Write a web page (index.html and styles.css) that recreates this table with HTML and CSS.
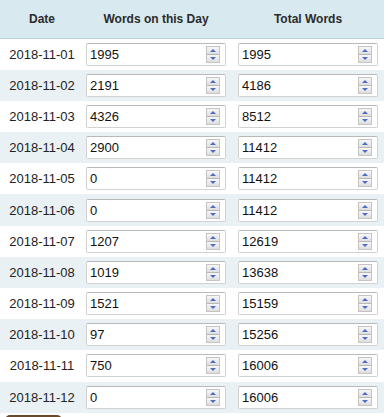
FILE: index.html
```html
<!DOCTYPE html>
<html>
<head>
<meta charset="utf-8">
<link rel="stylesheet" href="styles.css">
</head>
<body>
<table class="log">
  <thead>
    <tr><th class="c-date">Date</th><th class="c-num">Words on this Day</th><th class="c-num">Total Words</th></tr>
  </thead>
  <tbody>
    <tr><td class="date">2018-11-01</td><td><div class="field"><span class="val">1995</span><span class="spin"><i class="up"></i><i class="dn"></i></span></div></td><td><div class="field"><span class="val">1995</span><span class="spin"><i class="up"></i><i class="dn"></i></span></div></td></tr>
    <tr><td class="date">2018-11-02</td><td><div class="field"><span class="val">2191</span><span class="spin"><i class="up"></i><i class="dn"></i></span></div></td><td><div class="field"><span class="val">4186</span><span class="spin"><i class="up"></i><i class="dn"></i></span></div></td></tr>
    <tr><td class="date">2018-11-03</td><td><div class="field"><span class="val">4326</span><span class="spin"><i class="up"></i><i class="dn"></i></span></div></td><td><div class="field"><span class="val">8512</span><span class="spin"><i class="up"></i><i class="dn"></i></span></div></td></tr>
    <tr><td class="date">2018-11-04</td><td><div class="field"><span class="val">2900</span><span class="spin"><i class="up"></i><i class="dn"></i></span></div></td><td><div class="field"><span class="val">11412</span><span class="spin"><i class="up"></i><i class="dn"></i></span></div></td></tr>
    <tr><td class="date">2018-11-05</td><td><div class="field"><span class="val">0</span><span class="spin"><i class="up"></i><i class="dn"></i></span></div></td><td><div class="field"><span class="val">11412</span><span class="spin"><i class="up"></i><i class="dn"></i></span></div></td></tr>
    <tr><td class="date">2018-11-06</td><td><div class="field"><span class="val">0</span><span class="spin"><i class="up"></i><i class="dn"></i></span></div></td><td><div class="field"><span class="val">11412</span><span class="spin"><i class="up"></i><i class="dn"></i></span></div></td></tr>
    <tr><td class="date">2018-11-07</td><td><div class="field"><span class="val">1207</span><span class="spin"><i class="up"></i><i class="dn"></i></span></div></td><td><div class="field"><span class="val">12619</span><span class="spin"><i class="up"></i><i class="dn"></i></span></div></td></tr>
    <tr><td class="date">2018-11-08</td><td><div class="field"><span class="val">1019</span><span class="spin"><i class="up"></i><i class="dn"></i></span></div></td><td><div class="field"><span class="val">13638</span><span class="spin"><i class="up"></i><i class="dn"></i></span></div></td></tr>
    <tr><td class="date">2018-11-09</td><td><div class="field"><span class="val">1521</span><span class="spin"><i class="up"></i><i class="dn"></i></span></div></td><td><div class="field"><span class="val">15159</span><span class="spin"><i class="up"></i><i class="dn"></i></span></div></td></tr>
    <tr><td class="date">2018-11-10</td><td><div class="field"><span class="val">97</span><span class="spin"><i class="up"></i><i class="dn"></i></span></div></td><td><div class="field"><span class="val">15256</span><span class="spin"><i class="up"></i><i class="dn"></i></span></div></td></tr>
    <tr><td class="date">2018-11-11</td><td><div class="field"><span class="val">750</span><span class="spin"><i class="up"></i><i class="dn"></i></span></div></td><td><div class="field"><span class="val">16006</span><span class="spin"><i class="up"></i><i class="dn"></i></span></div></td></tr>
    <tr><td class="date">2018-11-12</td><td><div class="field"><span class="val">0</span><span class="spin"><i class="up"></i><i class="dn"></i></span></div></td><td><div class="field"><span class="val">16006</span><span class="spin"><i class="up"></i><i class="dn"></i></span></div></td></tr>
  </tbody>
</table>
<div class="btn"></div>
</body>
</html>
```

FILE: styles.css
```css
html, body { margin: 0; padding: 0; background: #fff; }
body { font-family: "Liberation Sans", Arial, sans-serif; font-size: 13px; color: #222; }
.log { border-collapse: collapse; width: 384px; table-layout: fixed; }
.log th { background: #d9e9f0; border-bottom: 1px solid #b6d3df; height: 38px; padding: 0; font-size: 12px; font-weight: bold; color: #2b2b2b; text-align: center; }
.log th.c-date { width: 76px; padding-left: 4px; }
.log th.c-num { width: 152px; }
.log td { padding: 0 6px; height: 31.2px; box-sizing: border-box; }
.log tbody tr:nth-child(even) td { background: #eaf1f5; }
.log td.date { text-align: center; padding: 0 0 0 4px; color: #222; }
.field { display: flex; align-items: center; width: 140px; height: 23px; box-sizing: border-box; border: 1px solid #d2d2d2; border-top-color: #b9b9b9; border-radius: 2px; background: #fff; padding: 0 5px 0 3px; }
.val { flex: 1; color: #111; }
.spin { display: flex; flex-direction: column; width: 14px; height: 17px; box-sizing: border-box; border: 1px solid #c4c4c4; background: #f2f2f2; }
.spin i { flex: 1; display: flex; align-items: center; justify-content: center; background: linear-gradient(#f7f7f7, #dedede); }
.spin i.up { border-bottom: 1px solid #b8b8b8; }
.spin i.up::after { content: ""; border-left: 3.5px solid transparent; border-right: 3.5px solid transparent; border-bottom: 3.5px solid #4e6cc2; }
.spin i.dn::after { content: ""; border-left: 3.5px solid transparent; border-right: 3.5px solid transparent; border-top: 3.5px solid #4e6cc2; }
.btn { margin: 2px 0 0 5px; width: 57px; height: 10px; background: #6a4a2c; border-radius: 5px 5px 0 0; }
```
